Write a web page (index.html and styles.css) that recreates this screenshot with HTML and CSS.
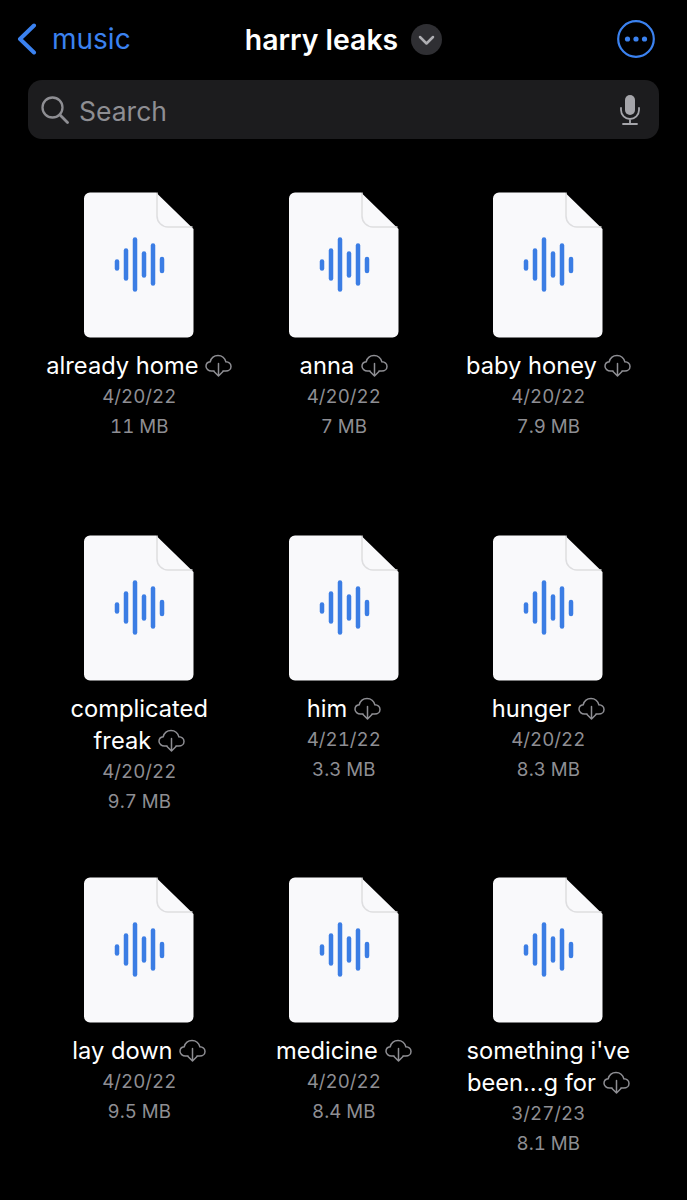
FILE: index.html
```html
<!DOCTYPE html>
<html lang="en">
<head>
    <meta charset="UTF-8">
    <title>harry leaks</title>
    <link rel="stylesheet" href="styles.css">
</head>
<body>
    <svg class="defs" width="0" height="0">
        <symbol id="file" viewBox="0 0 110 146">
            <path d="M6 .5H72L109.500 37V139.500a6 6 0 0 1-6 6H6a6 6 0 0 1-6-6V6.500a6 6 0 0 1 6-6z" fill="#f9f9fb"/>
            <path d="M73 .5V24a11 11 0 0 0 11 11H108.500" fill="none" stroke="#dedee0" stroke-width="1.500"/>
            <g stroke="#3b7de4" stroke-width="4.500" stroke-linecap="round">
                <path d="M33 69.500V76.500"/>
                <path d="M42 58.500V86.500"/>
                <path d="M51 47.500V97.500"/>
                <path d="M60 61.500V83.500"/>
                <path d="M69 53.500V91.500"/>
                <path d="M78 67V79"/>
            </g>
        </symbol>
        <symbol id="cloud" viewBox="0 0 27 23">
            <path d="M9 17H6.500C3.500 17 1 14.800 1 12.200C1 9.800 2.800 8 5.200 7.700C6.200 4 9.200 1.500 13 1.500C17 1.500 20 4.300 20.800 7.700C23.700 7.900 26 9.800 26 12.400C26 15 23.700 17 20.800 17H18" fill="none" stroke="#8e8e93" stroke-width="1.500" stroke-linecap="round"/>
            <path d="M13.500 9.500V21.500M9 17.500L13.500 22L18 17.500" fill="none" stroke="#8e8e93" stroke-width="1.500" stroke-linecap="round" stroke-linejoin="round"/>
        </symbol>
    </svg>

    <div class="nav">
        <div class="nav-left">
            <svg class="back" width="20" height="32" viewBox="0 0 20 32">
                <path d="M17 2.500L3 16L17 29.500" fill="none" stroke="#3b82f0" stroke-width="4" stroke-linecap="round" stroke-linejoin="round"/>
            </svg>
            <span class="back-label">music</span>
        </div>
        <div class="nav-title">
            <h1>harry leaks</h1>
            <svg width="31" height="31" viewBox="0 0 31 31">
                <circle cx="15.500" cy="15.500" r="15.500" fill="#2f2f33"/>
                <path d="M9 13L15.500 19.500L22 13" fill="none" stroke="#aeaeb2" stroke-width="2.500" stroke-linecap="round" stroke-linejoin="round"/>
            </svg>
        </div>
        <div class="nav-right">
            <svg width="38" height="38" viewBox="0 0 38 38">
                <circle cx="19" cy="19" r="17.800" fill="none" stroke="#3b82f0" stroke-width="2.200"/>
                <circle cx="10.500" cy="19" r="2.600" fill="#3b82f0"/>
                <circle cx="19" cy="19" r="2.600" fill="#3b82f0"/>
                <circle cx="27.500" cy="19" r="2.600" fill="#3b82f0"/>
            </svg>
        </div>
    </div>

    <div class="search">
        <svg width="28" height="28" viewBox="0 0 28 28">
            <circle cx="11.500" cy="11.500" r="10" fill="none" stroke="#8e8e93" stroke-width="2.300"/>
            <path d="M18.800 18.800L26.500 26.500" stroke="#8e8e93" stroke-width="2.800" stroke-linecap="round"/>
        </svg>
        <span class="search-text">Search</span>
        <svg class="mic" width="20" height="30" viewBox="0 0 20 30">
            <rect x="5" y="0" width="10" height="20" rx="5" fill="#a5a5aa"/>
            <path d="M1 13V15A9 9 0 0 0 19 15V13M10 24V28M3 29H17" fill="none" stroke="#a5a5aa" stroke-width="1.800" stroke-linecap="round"/>
        </svg>
    </div>

    <div class="grid">
        <div class="item">
            <svg class="doc" width="110" height="146"><use href="#file"/></svg>
            <div class="name">already home <svg class="cloud" width="27" height="23"><use href="#cloud"/></svg></div>
            <div class="meta">4/20/22</div>
            <div class="meta">11 MB</div>
        </div>
        <div class="item">
            <svg class="doc" width="110" height="146"><use href="#file"/></svg>
            <div class="name">anna <svg class="cloud" width="27" height="23"><use href="#cloud"/></svg></div>
            <div class="meta">4/20/22</div>
            <div class="meta">7 MB</div>
        </div>
        <div class="item">
            <svg class="doc" width="110" height="146"><use href="#file"/></svg>
            <div class="name">baby honey <svg class="cloud" width="27" height="23"><use href="#cloud"/></svg></div>
            <div class="meta">4/20/22</div>
            <div class="meta">7.9 MB</div>
        </div>
        <div class="item">
            <svg class="doc" width="110" height="146"><use href="#file"/></svg>
            <div class="name">complicated<br>freak <svg class="cloud" width="27" height="23"><use href="#cloud"/></svg></div>
            <div class="meta">4/20/22</div>
            <div class="meta">9.7 MB</div>
        </div>
        <div class="item">
            <svg class="doc" width="110" height="146"><use href="#file"/></svg>
            <div class="name">him <svg class="cloud" width="27" height="23"><use href="#cloud"/></svg></div>
            <div class="meta">4/21/22</div>
            <div class="meta">3.3 MB</div>
        </div>
        <div class="item">
            <svg class="doc" width="110" height="146"><use href="#file"/></svg>
            <div class="name">hunger <svg class="cloud" width="27" height="23"><use href="#cloud"/></svg></div>
            <div class="meta">4/20/22</div>
            <div class="meta">8.3 MB</div>
        </div>
        <div class="item">
            <svg class="doc" width="110" height="146"><use href="#file"/></svg>
            <div class="name">lay down <svg class="cloud" width="27" height="23"><use href="#cloud"/></svg></div>
            <div class="meta">4/20/22</div>
            <div class="meta">9.5 MB</div>
        </div>
        <div class="item">
            <svg class="doc" width="110" height="146"><use href="#file"/></svg>
            <div class="name">medicine <svg class="cloud" width="27" height="23"><use href="#cloud"/></svg></div>
            <div class="meta">4/20/22</div>
            <div class="meta">8.4 MB</div>
        </div>
        <div class="item">
            <svg class="doc" width="110" height="146"><use href="#file"/></svg>
            <div class="name">something i've<br>been...g for <svg class="cloud" width="27" height="23"><use href="#cloud"/></svg></div>
            <div class="meta">3/27/23</div>
            <div class="meta">8.1 MB</div>
        </div>
    </div>
</body>
</html>
```

FILE: styles.css
```css
html, body {
    height: 1200px;
    overflow: hidden;
}

body {
    margin: 0;
    font-family: Inter, "Liberation Sans", sans-serif;
    background-color: #000;
    color: white;
}

.defs {
    display: block;
    height: 0;
}

.nav {
    display: grid;
    grid-template-columns: 1fr auto 1fr;
    align-items: center;
    height: 38px;
    padding: 20px 17px 22px 17px;
}

.nav-left {
    display: flex;
    align-items: center;
    gap: 15px;
}

.back-label {
    font-size: 28px;
    color: #3b82f0;
}

.nav-title {
    display: flex;
    align-items: center;
    gap: 13px;
}

.nav-title h1 {
    margin: 0;
    font-size: 28.400px;
    font-weight: 600;
}

.nav-right {
    display: flex;
    justify-content: flex-end;
    padding-right: 15px;
}

.search {
    display: flex;
    align-items: center;
    height: 59px;
    margin: 0 28px;
    padding: 0 19px 0 13px;
    border-radius: 14px;
    background-color: #1c1c1e;
}

.search-text {
    flex: 1;
    margin-left: 10px;
    padding-top: 2px;
    font-size: 26.500px;
    color: #8e8e93;
}

.grid {
    display: grid;
    grid-template-columns: repeat(3, 204.500px);
    grid-auto-rows: 342.500px;
    margin-top: 53px;
    padding-left: 37px;
}

.item {
    display: flex;
    flex-direction: column;
    align-items: center;
    text-align: center;
}

.doc {
    display: block;
    flex-shrink: 0;
}

.name {
    margin-top: 12px;
    font-size: 23.700px;
    line-height: 32px;
}

.cloud {
    vertical-align: -3px;
}

.meta {
    font-size: 18.700px;
    line-height: 30px;
    font-variant-numeric: tabular-nums;
    color: #8e8e93;
}
```
